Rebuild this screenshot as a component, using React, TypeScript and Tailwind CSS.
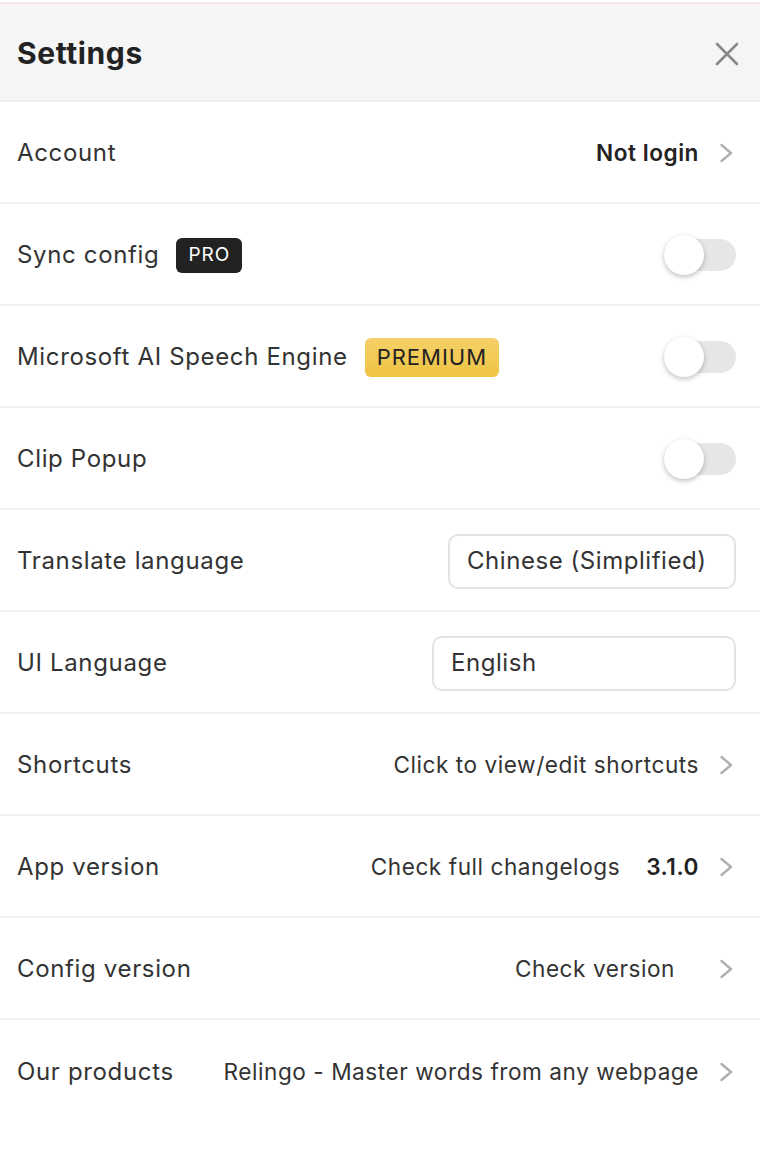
import React from "react"

function Chevron() {
  return (
    <svg className="ml-[21px] mr-[3px] shrink-0" width="13" height="20" viewBox="0 0 13 20" fill="none">
      <polyline points="1.5,2 11,10 1.5,18" stroke="#b0b0b0" strokeWidth="2.4" strokeLinecap="round" strokeLinejoin="round" />
    </svg>
  )
}

function CloseIcon() {
  return (
    <svg width="24" height="24" viewBox="0 0 24 24" fill="none">
      <path d="M2 2L22 22M22 2L2 22" stroke="#888" strokeWidth="2.6" strokeLinecap="round" />
    </svg>
  )
}

function Toggle() {
  return (
    <div className="relative w-[72px] h-[32px] rounded-full bg-[#e6e6e6]">
      <div className="absolute left-0 -top-[4px] w-[40px] h-[40px] rounded-full bg-white shadow-[0_2px_5px_rgba(0,0,0,0.25)]" />
    </div>
  )
}

function Row({ label, children, last }: { label: React.ReactNode; children?: React.ReactNode; last?: boolean }) {
  return (
    <div className={`flex items-center justify-between h-[102px] pt-[2px] pl-[17px] pr-[24px] ${last ? "" : "border-b-2 border-[#f0f0f0]"}`}>
      <div className="flex items-center gap-[17px] text-[24px] text-[#333] tracking-[0.65px]">{label}</div>
      <div className="flex items-center text-[22.6px] text-[#333]">{children}</div>
    </div>
  )
}

export default function App() {
  return (
    <div className="w-[760px] min-h-[1150px] bg-white font-['Inter','Noto_Sans',sans-serif] tracking-[0.55px]">
      <div className="h-[4px] bg-[#f7e6ea] border-t-2 border-white" />
      <div className="flex items-center justify-between h-[98px] pt-[3px] pl-[17px] pr-[21px] bg-[#f5f5f5] border-b-2 border-[#eeeeee]">
        <h1 className="text-[30px] font-bold text-[#222] tracking-[0.6px]">Settings</h1>
        <CloseIcon />
      </div>

      <Row label="Account">
        <span className="font-semibold text-[#222]">Not login</span>
        <Chevron />
      </Row>

      <Row
        label={
          <>
            <span>Sync config</span>
            <span className="px-[12px] h-[35px] flex items-center rounded-[6px] bg-[#222] text-white text-[19px] tracking-[1px]">PRO</span>
          </>
        }
      >
        <Toggle />
      </Row>

      <Row
        label={
          <>
            <span>Microsoft AI Speech Engine</span>
            <span className="px-[12px] h-[39px] flex items-center rounded-[6px] bg-gradient-to-b from-[#f6d068] to-[#eec441] text-[#222] text-[22px] tracking-[1px]">
              PREMIUM
            </span>
          </>
        }
      >
        <Toggle />
      </Row>

      <Row label="Clip Popup">
        <Toggle />
      </Row>

      <Row label="Translate language">
        <div className="w-[288px] h-[55px] flex items-center px-[17px] rounded-[10px] border-2 border-[#e3e3e3] text-[24px] tracking-[0.55px]">
          Chinese (Simplified)
        </div>
      </Row>

      <Row label="UI Language">
        <div className="w-[304px] h-[55px] flex items-center px-[17px] rounded-[10px] border-2 border-[#e3e3e3] text-[24px] tracking-[0.55px]">
          English
        </div>
      </Row>

      <Row label="Shortcuts">
        <span>Click to view/edit shortcuts</span>
        <Chevron />
      </Row>

      <Row label="App version">
        <span>Check full changelogs</span>
        <span className="ml-[26px] font-semibold text-[#222]">3.1.0</span>
        <Chevron />
      </Row>

      <Row label="Config version">
        <span className="mr-[24px]">Check version</span>
        <Chevron />
      </Row>

      <Row label="Our products" last>
        <span>Relingo - Master words from any webpage</span>
        <Chevron />
      </Row>
    </div>
  )
}
